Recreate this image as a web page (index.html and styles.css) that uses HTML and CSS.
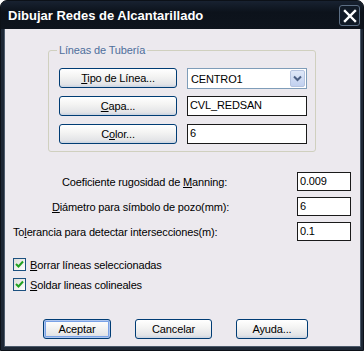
FILE: index.html
```html
<!DOCTYPE html>
<html>
<head>
    <title>Dibujar Redes de Alcantarillado</title>
    <link rel="stylesheet" href="styles.css">
</head>
<body>
    <div class="window">
        <div class="titlebar">
            <span class="title">Dibujar Redes de Alcantarillado</span>
            <span class="close-btn">
                <svg width="14" height="14" viewBox="0 0 14 14">
                    <path d="M2 2 L12 12 M12 2 L2 12" stroke="#fff" stroke-width="2.4" stroke-linecap="square"/>
                </svg>
            </span>
        </div>

        <div class="client">
            <!-- Group: pipe lines -->
            <fieldset class="group">
                <legend>Líneas de Tubería</legend>
                <div class="group-row">
                    <button class="btn wide"><u>T</u>ipo de Línea...</button>
                    <div class="combo">
                        <span class="combo-text">CENTRO1</span>
                        <span class="combo-arrow">
                            <svg width="9" height="7" viewBox="0 0 9 7">
                                <path d="M1 1.5 L4.5 5 L8 1.5" fill="none" stroke="#4d6185" stroke-width="2"/>
                            </svg>
                        </span>
                    </div>
                </div>
                <div class="group-row">
                    <button class="btn wide"><u>C</u>apa...</button>
                    <div class="field long">CVL_REDSAN</div>
                </div>
                <div class="group-row">
                    <button class="btn wide">C<u>o</u>lor...</button>
                    <div class="field long">6</div>
                </div>
            </fieldset>

            <!-- Numeric parameters -->
            <div class="params">
                <div class="param-row">
                    <span class="param-label manning">Coeficiente rugosidad de <u>M</u>anning:</span>
                    <div class="field short">0.009</div>
                </div>
                <div class="param-row">
                    <span class="param-label diametro"><u>D</u>iámetro para símbolo de pozo(mm):</span>
                    <div class="field short">6</div>
                </div>
                <div class="param-row">
                    <span class="param-label tolerancia">To<u>l</u>erancia para detectar intersecciones(m):</span>
                    <div class="field short">0.1</div>
                </div>
            </div>

            <!-- Options -->
            <div class="options">
                <label class="check-row">
                    <span class="checkbox">
                        <svg width="9" height="9" viewBox="0 0 9 9">
                            <path d="M1 4 L3.5 6.5 L8 1.5" fill="none" stroke="#21a121" stroke-width="2"/>
                        </svg>
                    </span>
                    <span><u>B</u>orrar líneas seleccionadas</span>
                </label>
                <label class="check-row">
                    <span class="checkbox">
                        <svg width="9" height="9" viewBox="0 0 9 9">
                            <path d="M1 4 L3.5 6.5 L8 1.5" fill="none" stroke="#21a121" stroke-width="2"/>
                        </svg>
                    </span>
                    <span><u>S</u>oldar lineas colineales</span>
                </label>
            </div>

            <div class="actions">
                <button class="btn action default">Aceptar</button>
                <button class="btn action cancel">Cancelar</button>
                <button class="btn action help">Ayuda...</button>
            </div>
        </div>
    </div>
</body>
</html>
```

FILE: styles.css
```css
/* Reset some default styles */
body {
    margin: 0;
    padding: 0;
    font-family: "Liberation Sans", Arial, sans-serif;
    font-size: 11px;
    letter-spacing: -0.15px;
    background-color: #ffffff;
}

u {
    text-decoration: underline;
    text-underline-offset: 1px;
}

/* Window frame */
.window {
    width: 364px;
    height: 351px;
    box-sizing: border-box;
    display: flex;
    flex-direction: column;
    background-color: #1d2735;
    border-radius: 7px 7px 0 0;
    border: 1px solid #0c1118;
    padding: 0 2px 3px 3px;
}

.titlebar {
    height: 28px;
    display: flex;
    align-items: center;
    justify-content: space-between;
    margin: 0 -2px 0 -3px;
    padding-left: 7px;
    padding-right: 3px;
    background: linear-gradient(#182231, #0c121b 40%, #0e141d);
    border-radius: 7px 7px 0 0;
}

.title {
    color: #ffffff;
    font-size: 13px;
    font-weight: bold;
    letter-spacing: 0;
    margin-top: 1px;
}

.close-btn {
    width: 19px;
    height: 19px;
    display: flex;
    align-items: center;
    justify-content: center;
    border: 1px solid #5c6e84;
    border-radius: 3px;
    background-color: #111a26;
    margin-top: 1px;
}

.client {
    flex: 1;
    background-color: #ece9ee;
    border-left: 1px solid #4c5a6b;
    border-right: 1px solid #4c5a6b;
    border-bottom: 1px solid #4c5a6b;
}

/* Group box */
.group {
    margin: 15px 0 0 43px;
    width: 268px;
    height: 108px;
    box-sizing: border-box;
    border: 1px solid #d0d0bf;
    border-radius: 3px;
    padding: 12px 0 0 10px;
}

.group legend {
    color: #4f6f9c;
    padding: 0 2px;
    margin-left: -2px;
}

.group-row {
    display: flex;
    align-items: center;
    gap: 10px;
    height: 20px;
    margin-bottom: 8px;
}

/* Buttons */
.btn {
    font-family: "Liberation Sans", Arial, sans-serif;
    font-size: 11px;
    letter-spacing: -0.15px;
    color: #000;
    height: 20px;
    padding: 0;
    border: 1px solid #003c74;
    border-radius: 3px;
    background: linear-gradient(#ffffff, #f4f4f3 40%, #e3e4e7 85%, #c9d2e0);
}

.btn.wide {
    width: 118px;
}

.btn.default {
    box-shadow: inset 0 0 0 1px #aec6ef, inset 0 0 0 2px #7aa2e6;
}

/* Inputs */
.field {
    height: 20px;
    box-sizing: border-box;
    border: 1px solid #1a1a1a;
    background-color: #ffffff;
    padding: 2px 0 0 2px;
    color: #000;
}

.field.long {
    width: 120px;
}

.field.short {
    width: 54px;
    height: 19px;
}

.combo {
    width: 120px;
    height: 21px;
    box-sizing: border-box;
    border: 1px solid #7f9db9;
    background-color: #ffffff;
    display: flex;
    align-items: center;
    justify-content: space-between;
    padding: 1px;
    margin-top: 1px;
}

.combo-text {
    padding-left: 2px;
}

.combo-arrow {
    width: 15px;
    height: 17px;
    box-sizing: border-box;
    display: flex;
    align-items: center;
    justify-content: center;
    border: 1px solid #b6c4e0;
    border-radius: 2px;
    background: linear-gradient(#dfe8f8, #c1d0ef);
}

/* Numeric parameters */
.params {
    margin-top: 20px;
    display: flex;
    flex-direction: column;
    gap: 6px;
}

.param-row {
    display: flex;
    align-items: center;
    height: 19px;
}

.param-label {
    flex: 1;
}

.param-label.manning {
    padding-left: 57px;
}

.param-label.diametro {
    padding-left: 47px;
}

.param-label.tolerancia {
    padding-left: 8px;
}

.param-row .field {
    margin-right: 9px;
}

/* Check boxes */
.options {
    margin-top: 17px;
    padding-left: 8px;
    display: flex;
    flex-direction: column;
    gap: 7px;
}

.check-row {
    display: flex;
    align-items: center;
    gap: 4px;
    height: 13px;
}

.checkbox {
    width: 13px;
    height: 13px;
    box-sizing: border-box;
    border: 1px solid #1c5180;
    background: linear-gradient(135deg, #dcdcd7, #ffffff);
    display: flex;
    align-items: center;
    justify-content: center;
}

/* Bottom buttons */
.actions {
    display: flex;
    margin-top: 28px;
    padding-left: 38px;
}

.btn.action {
    height: 20px;
}

.btn.default {
    width: 68px;
}

.btn.cancel {
    width: 77px;
    margin-left: 24px;
}

.btn.help {
    width: 72px;
    margin-left: 24px;
}
```
